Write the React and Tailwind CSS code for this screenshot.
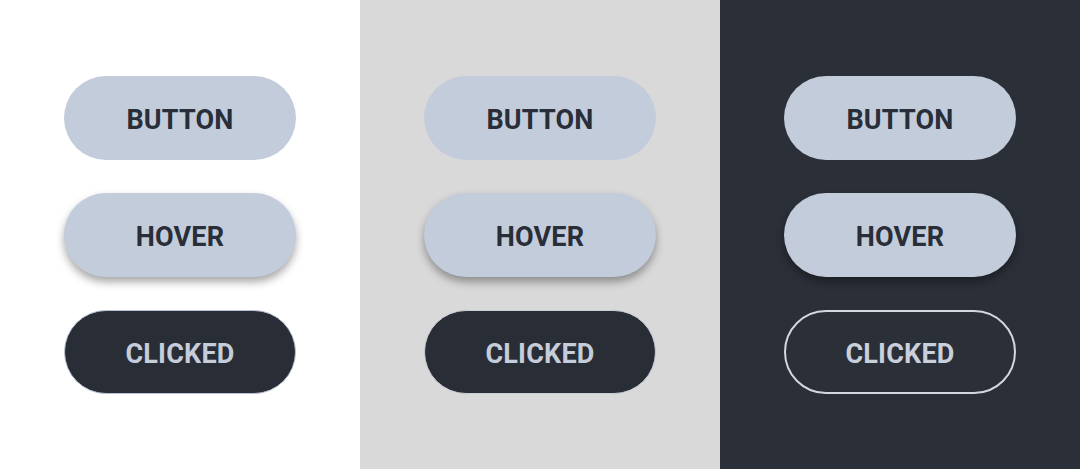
const panels = [
  { bg: "bg-white", clicked: "bg-[#292d36] text-[#c5cddb] border border-[#b9c3d3]" },
  { bg: "bg-[#d9d9d9]", clicked: "bg-[#292d36] text-[#c5cddb] border border-[#c9ced6]" },
  { bg: "bg-[#2b2f38]", clicked: "bg-transparent text-[#c9d0dc] border-2 border-[#d3d7de]" },
];

function Pill({ className, children }) {
  return (
    <div
      className={
        "w-[232px] h-[84px] pt-[6px] rounded-full flex items-center justify-center text-[27px] font-bold tracking-[0.2px] " +
        className
      }
    >
      {children}
    </div>
  );
}

export default function App() {
  return (
    <div className="w-[1080px] h-[469px] grid grid-cols-3" style={{ fontFamily: "Roboto, 'Liberation Sans', sans-serif" }}>
      {panels.map((p, i) => (
        <div key={i} className={"flex flex-col items-center justify-center gap-[33px] " + p.bg}>
          <Pill className="bg-[#c3ccdb] text-[#292e38]">BUTTON</Pill>
          <Pill className="bg-[#c3ccdb] text-[#292e38] shadow-[0_5px_8px_rgba(0,0,0,0.35)]">HOVER</Pill>
          <Pill className={p.clicked}>CLICKED</Pill>
        </div>
      ))}
    </div>
  );
}
